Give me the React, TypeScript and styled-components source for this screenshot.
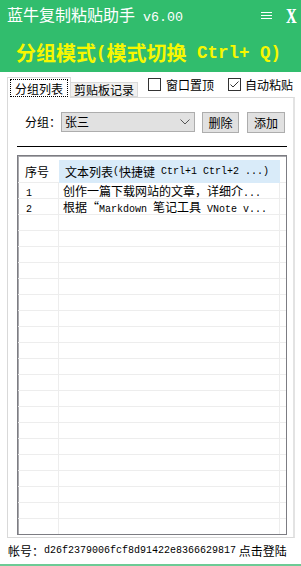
import React from 'react';
import styled, { createGlobalStyle } from 'styled-components';

const GlobalStyle = createGlobalStyle`
  html, body { margin: 0; padding: 0; background: #ffffff; }
  body {
    width: 301px; height: 566px; overflow: hidden;
    font-family: "Noto Sans CJK SC", "Noto Sans", sans-serif;
    color: #000;
  }
  * { box-sizing: border-box; }
`;

const SP = '\u00a0';

const Window = styled.div`
  width: 301px;
  height: 566px;
  display: flex;
  flex-direction: column;
  background: #ffffff;
`;

const Header = styled.header`
  height: 72px;
  background: #31bd6d;
  display: flex;
  flex-direction: column;
  flex-shrink: 0;
`;

const TitleBar = styled.div`
  height: 31px;
  display: flex;
  align-items: center;
  padding: 0 5px 0 7px;
  color: #ffffff;
`;

const Title = styled.div`
  flex: 1;
  font-size: 16px;
  line-height: 16px;
  white-space: nowrap;
`;

const Latin = styled.span<{ $size: number; $bold?: boolean }>`
  font-family: "Liberation Mono", monospace;
  font-size: ${(p) => p.$size}px;
  font-weight: ${(p) => (p.$bold ? 700 : 400)};
`;

const MenuIcon = styled.svg`
  width: 11px;
  height: 8px;
  margin-right: 15px;
  display: block;
`;

const CloseX = styled.div`
  width: 9px;
  font-family: "Liberation Serif", serif;
  font-weight: 700;
  font-size: 20px;
  line-height: 20px;
  color: #ffffff;
  text-shadow: -0.5px 0 0 #bff4ff;
  transform: scaleX(0.72);
  display: flex;
  justify-content: center;
`;

const ModeLine = styled.div`
  flex: 1;
  display: flex;
  align-items: center;
  padding-left: 16px;
  padding-top: 2px;
  color: #f7f700;
  font-weight: 700;
  font-size: 20px;
  line-height: 20px;
  white-space: pre;
`;

const TabRow = styled.div`
  height: 25px;
  display: flex;
  align-items: flex-end;
  padding-left: 7px;
  flex-shrink: 0;
`;

const Tab = styled.div<{ $active?: boolean }>`
  height: ${(p) => (p.$active ? 21 : 15)}px;
  width: ${(p) => (p.$active ? 64 : 67)}px;
  background: ${(p) => (p.$active ? '#ffffff' : '#f0f0f0')};
  border: 1px solid #d9d9d9;
  border-bottom: ${(p) => (p.$active ? 'none' : '1px solid #d9d9d9')};
  border-left: ${(p) => (p.$active ? '1px solid #d9d9d9' : 'none')};
  margin-bottom: ${(p) => (p.$active ? -1 : 0)}px;
  position: relative;
  z-index: ${(p) => (p.$active ? 1 : 0)};
  display: flex;
  font-size: 12px;
  line-height: 13px;
  padding: ${(p) => (p.$active ? '1px 2px 1px 2px' : '0 0 0 3px')};
  align-items: ${(p) => (p.$active ? 'stretch' : 'center')};
`;

const FocusRect = styled.div`
  flex: 1;
  border: 1px dotted #000;
  display: flex;
  align-items: center;
  justify-content: center;
`;

const CheckGroup = styled.label<{ $gap: number }>`
  align-self: flex-start;
  margin-top: 6px;
  margin-left: ${(p) => p.$gap}px;
  display: flex;
  align-items: center;
  font-size: 12px;
  line-height: 13px;
  white-space: nowrap;
`;

const CheckBox = styled.svg<{ $gap: number }>`
  width: 13px;
  height: 13px;
  display: block;
  margin-right: ${(p) => p.$gap}px;
`;

const Panel = styled.section`
  height: 441px;
  width: 288px;
  margin-left: 7px;
  border: 1px solid #d9d9d9;
  border-right: 2px solid #e3e3e3;
  display: flex;
  flex-direction: column;
  flex-shrink: 0;
`;

const GroupRow = styled.div`
  margin-top: 14px;
  height: 21px;
  display: flex;
  align-items: flex-start;
  padding-left: 17px;
  font-size: 12px;
`;

const GroupLabel = styled.span`
  width: 36px;
  height: 20px;
  line-height: 20px;
`;

const Combo = styled.div`
  width: 134px;
  height: 20px;
  background: #e1e1e1;
  border: 1px solid #adadad;
  display: flex;
  align-items: center;
  padding: 0 4px 0 3px;
  line-height: 18px;
`;

const ComboText = styled.span`
  flex: 1;
`;

const Chevron = styled.svg`
  width: 10px;
  height: 6px;
  display: block;
`;

const Button = styled.div<{ $w: number; $gap: number }>`
  width: ${(p) => p.$w}px;
  height: 21px;
  margin-left: ${(p) => p.$gap}px;
  background: #e1e1e1;
  border: 1px solid #adadad;
  display: flex;
  align-items: center;
  justify-content: center;
  line-height: 19px;
`;

const Rule = styled.div`
  margin: 13px 0 0 9px;
  width: 270px;
  height: 1px;
  background: #000;
`;

const ListView = styled.div`
  margin: 8px 0 0 9px;
  width: 270px;
  height: 380px;
  border: 1px solid #7c7c82;
  box-shadow: inset 1px 1px 0 #a9a9ad;
  padding-top: 4px;
  display: flex;
  flex-direction: column;
  overflow: hidden;
  font-size: 12px;
`;

const HeaderRow = styled.div`
  height: 23px;
  display: flex;
  flex-shrink: 0;
  box-shadow: inset 0 -1px 0 #ededed;
`;

const HeadCell = styled.div<{ $w: number; $pad: number; $hot?: boolean }>`
  width: ${(p) => p.$w}px;
  padding-left: ${(p) => p.$pad}px;
  background: ${(p) => (p.$hot ? '#d9ebf9' : 'transparent')};
  display: flex;
  align-items: center;
  white-space: pre;
  line-height: 16px;
`;

const Body = styled.div`
  flex: 1;
  overflow: hidden;
`;

const Row = styled.div`
  height: 16px;
  display: flex;
  box-shadow: inset 0 -1px 0 #ededed;
`;

const Cell = styled.div<{ $w: number; $pad: number }>`
  width: ${(p) => p.$w}px;
  height: 16px;
  padding-left: ${(p) => p.$pad}px;
  border-right: 1px solid #ededed;
  white-space: pre;
  line-height: 16px;
  flex-shrink: 0;
`;

const Footer = styled.footer`
  height: 26px;
  display: flex;
  align-items: center;
  padding-left: 8px;
  font-size: 12px;
  line-height: 14px;
  white-space: pre;
  flex-shrink: 0;
`;

const BottomLine = styled.div`
  height: 2px;
  background: #6ccb95;
  flex-shrink: 0;
`;

const rows: React.ReactNode[] = [
  <>创作一篇下载网站的文章，详细介<Latin $size={10}>...</Latin></>,
  <>根据“<Latin $size={10}>Markdown{SP}</Latin>笔记工具<Latin $size={10}>{SP}VNote v...</Latin></>,
];

export default function App() {
  const emptyRows = Array.from({ length: 22 - rows.length });
  return (
    <Window>
      <GlobalStyle />
      <Header>
        <TitleBar>
          <Title>
            蓝牛复制粘贴助手<Latin $size={13.34}>{SP}v6.00</Latin>
          </Title>
          <MenuIcon viewBox="0 0 11 8">
            <path d="M0 0.5H11M0 3.5H11M0 6.5H11" stroke="#ffffff" strokeWidth="1" />
          </MenuIcon>
          <CloseX>X</CloseX>
        </TitleBar>
        <ModeLine>
          分组模式<Latin $size={17.5} $bold>(</Latin>模式切换<Latin $size={17.5} $bold>{SP}Ctrl+{SP}Q)</Latin>
        </ModeLine>
      </Header>

      <TabRow>
        <Tab $active>
          <FocusRect>分组列表</FocusRect>
        </Tab>
        <Tab>剪贴板记录</Tab>
        <CheckGroup $gap={10}>
          <CheckBox viewBox="0 0 13 13" $gap={5}>
            <rect x="0.5" y="0.5" width="12" height="12" fill="#fff" stroke="#333" />
          </CheckBox>
          窗口置顶
        </CheckGroup>
        <CheckGroup $gap={14}>
          <CheckBox viewBox="0 0 13 13" $gap={4}>
            <rect x="0.5" y="0.5" width="12" height="12" fill="#fff" stroke="#333" />
            <path d="M2.5 6.5L5 9L10.5 3.5" fill="none" stroke="#333" strokeWidth="1" />
          </CheckBox>
          自动粘贴
        </CheckGroup>
      </TabRow>

      <Panel>
        <GroupRow>
          <GroupLabel>分组：</GroupLabel>
          <Combo>
            <ComboText>张三</ComboText>
            <Chevron viewBox="0 0 10 6">
              <path d="M0.5 0.5L5 5L9.5 0.5" fill="none" stroke="#555" strokeWidth="1" />
            </Chevron>
          </Combo>
          <Button $w={37} $gap={7}>删除</Button>
          <Button $w={38} $gap={8}>添加</Button>
        </GroupRow>
        <Rule />
        <ListView>
          <HeaderRow>
            <HeadCell $w={41} $pad={7}>序号</HeadCell>
            <HeadCell $w={221} $pad={6} $hot>
              文本列表<Latin $size={10}>(</Latin>快捷键<Latin $size={10}>{SP}Ctrl+1 Ctrl+2 ...)</Latin>
            </HeadCell>
          </HeaderRow>
          <Body>
            {rows.map((r, i) => (
              <Row key={i}>
                <Cell $w={41} $pad={8}><Latin $size={10}>{i + 1}</Latin></Cell>
                <Cell $w={221} $pad={4}>{r}</Cell>
              </Row>
            ))}
            {emptyRows.map((_, i) => (
              <Row key={`e${i}`}>
                <Cell $w={41} $pad={8} />
                <Cell $w={221} $pad={4} />
              </Row>
            ))}
          </Body>
        </ListView>
      </Panel>

      <Footer>
        帐号：<Latin $size={10}>d26f2379006fcf8d91422e8366629817</Latin>{SP}点击登陆
      </Footer>
      <BottomLine />
    </Window>
  );
}
